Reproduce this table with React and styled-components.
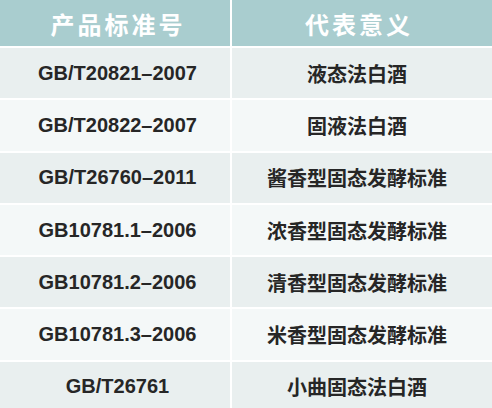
import React from "react";
import styled, { createGlobalStyle } from "styled-components";

const Global = createGlobalStyle`
  html, body { margin: 0; padding: 0; background: #ffffff; }
  body { font-family: "Liberation Sans", "Noto Sans CJK SC", sans-serif; }
`;

const Table = styled.div`
  width: 492px;
  height: 408px;
  overflow: hidden;
  display: flex;
  flex-direction: column;
  gap: 2px;
  background: #ffffff;
`;

const Row = styled.div`
  display: grid;
  grid-template-columns: 230px 1fr;
  column-gap: 2px;
  flex: 0 0 auto;
  height: ${(p) => (p.$header ? "46px" : "50.3px")};
`;

const HeadCell = styled.div`
  background: #a9cdcf;
  color: #ffffff;
  display: flex;
  align-items: center;
  justify-content: center;
  font-family: "Noto Sans CJK SC", sans-serif;
  font-weight: 700;
  font-size: 24px;
  letter-spacing: 3px;
  padding-left: ${(p) => (p.$right ? "0" : "6px")};
  padding-right: ${(p) => (p.$right ? "6px" : "0")};
`;

const Cell = styled.div`
  background: ${(p) => (p.$shade ? "#e9efef" : "#f4f8f8")};
  color: #262626;
  display: flex;
  align-items: center;
  justify-content: center;
  font-weight: 700;
  font-size: 20px;
`;

const Code = styled(Cell)`
  font-family: "Liberation Sans", Arial, sans-serif;
  padding-left: 5px;
`;

const Meaning = styled(Cell)`
  font-family: "Noto Sans CJK SC", sans-serif;
  padding-right: 10px;
`;

const rows = [
  ["GB/T20821–2007", "液态法白酒"],
  ["GB/T20822–2007", "固液法白酒"],
  ["GB/T26760–2011", "酱香型固态发酵标准"],
  ["GB10781.1–2006", "浓香型固态发酵标准"],
  ["GB10781.2–2006", "清香型固态发酵标准"],
  ["GB10781.3–2006", "米香型固态发酵标准"],
  ["GB/T26761", "小曲固态法白酒"],
];

export default function App() {
  return (
    <>
      <Global />
      <Table>
        <Row $header>
          <HeadCell>产品标准号</HeadCell>
          <HeadCell $right>代表意义</HeadCell>
        </Row>
        {rows.map(([code, meaning], i) => (
          <Row key={code}>
            <Code $shade={i % 2 === 0}>{code}</Code>
            <Meaning $shade={i % 2 === 0}>{meaning}</Meaning>
          </Row>
        ))}
      </Table>
    </>
  );
}
